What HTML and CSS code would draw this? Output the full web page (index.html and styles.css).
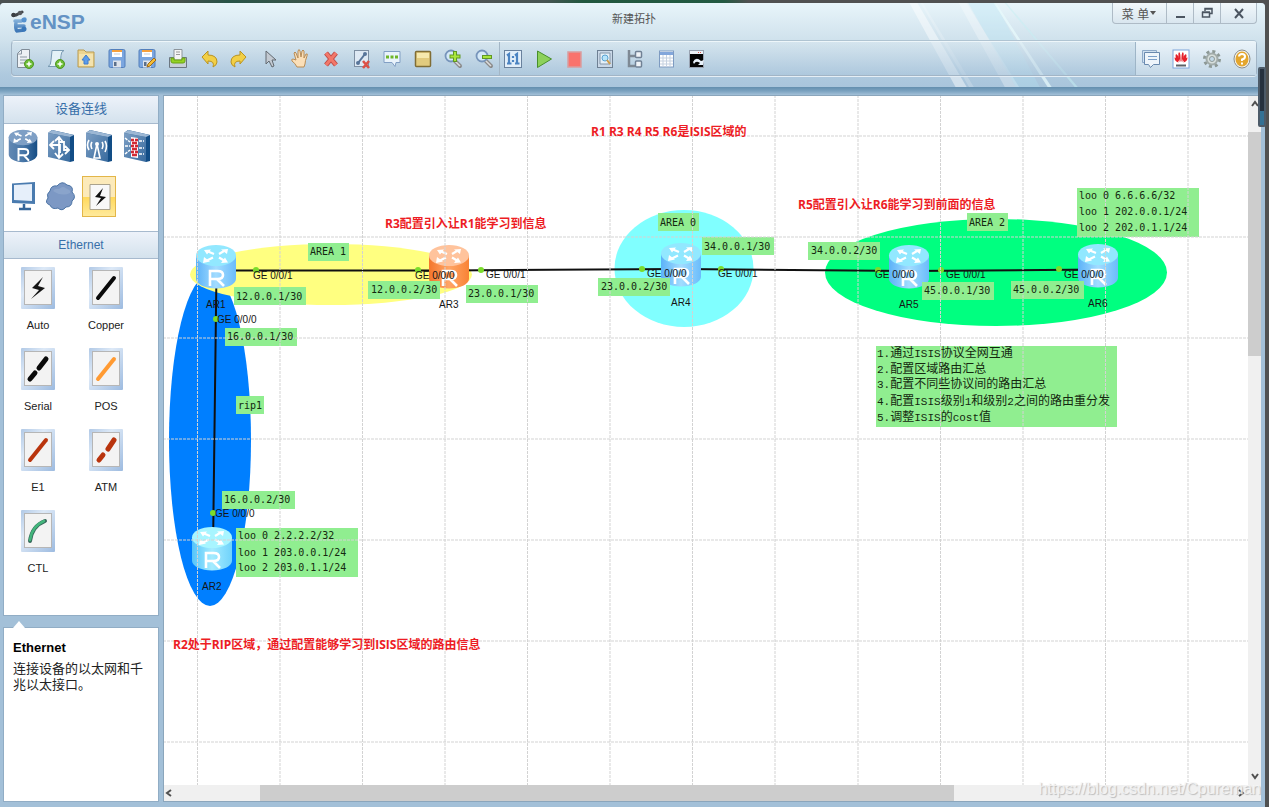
FILE: index.html
```html
<!DOCTYPE html>
<html lang="zh-CN">
<head>
<meta charset="utf-8">
<title>eNSP</title>
<link rel="stylesheet" href="styles.css">
</head>
<body>
<svg class="defs" aria-hidden="true">
  <defs>
    <linearGradient id="gBody" x1="0" x2="1"><stop offset="0" stop-color="#5cb2f8"/><stop offset=".5" stop-color="#a2dcff"/><stop offset="1" stop-color="#6bbcfb"/></linearGradient>
    <linearGradient id="gOrange" x1="0" x2="1"><stop offset="0" stop-color="#f4762c"/><stop offset=".5" stop-color="#ffa566"/><stop offset="1" stop-color="#f98335"/></linearGradient>
    <linearGradient id="gCyan" x1="0" x2="1"><stop offset="0" stop-color="#55c4fa"/><stop offset=".5" stop-color="#a5ecff"/><stop offset="1" stop-color="#6fd2fb"/></linearGradient>
    <linearGradient id="gNavy" x1="0" x2="1"><stop offset="0" stop-color="#6288b3"/><stop offset=".5" stop-color="#4977a8"/><stop offset="1" stop-color="#154d85"/></linearGradient>
    <linearGradient id="gPlate" x1="0" y1="0" x2="1" y2="1"><stop offset="0" stop-color="#7d9fc4"/><stop offset="1" stop-color="#376a9e"/></linearGradient>
    <linearGradient id="gFrame" x1="0" y1="0" x2="1" y2="1"><stop offset="0" stop-color="#b1c9e6"/><stop offset=".35" stop-color="#dde9f7"/><stop offset="1" stop-color="#9dbbe0"/></linearGradient>
    <linearGradient id="gLogo" x1="0" y1="0" x2="0" y2="1"><stop offset="0" stop-color="#8ab6dd"/><stop offset="1" stop-color="#3f78b7"/></linearGradient>
    <g id="arrows">
      <path d="m18 9-6-2.500M23 9l5-3M17 12.500l-6 3M23 12.500l5 3" fill="none" stroke="#fff" stroke-width="2.200"/>
      <path d="m8 5 7-.5-4 5zM32 4l-1 5-6-4.500zM7 18l1-6 6 4.500zM32 17.500l-7 .5 4-5.500z" fill="#fff"/>
    </g>
    <path id="letter" d="M14 41V26h7.500q5.500 0 5.500 4t-5.500 4H14M21 34l7 7" fill="none" stroke="#fff" stroke-width="2.600"/>
    <g id="router">
      <path d="M0 10v24c0 5 9 9.500 20 9.500S40 39 40 34V10z" fill="url(#gBody)"/>
      <ellipse cx="20" cy="10.500" rx="20" ry="10.500" fill="#92e8ff"/>
      <use href="#arrows"/><use href="#letter"/>
    </g>
    <g id="routerOrange">
      <path d="M0 10v24c0 5 9 9.500 20 9.500S40 39 40 34V10z" fill="url(#gOrange)"/>
      <ellipse cx="20" cy="10.500" rx="20" ry="10.500" fill="#ffc39c"/>
      <use href="#arrows"/><use href="#letter"/>
    </g>
    <g id="routerCyan">
      <path d="M0 10v24c0 5 9 9.500 20 9.500S40 39 40 34V10z" fill="url(#gCyan)"/>
      <ellipse cx="20" cy="10.500" rx="20" ry="10.500" fill="#a8f5ff"/>
      <use href="#arrows"/><use href="#letter"/>
    </g>
    <g id="tile">
      <rect width="34" height="42" rx="1" fill="url(#gFrame)"/>
      <rect x="3.500" y="3.500" width="27" height="34" fill="#f3f3f3" stroke="#b6b6b6"/>
    </g>
    <g id="plus"><circle cx="14" cy="16" r="4.500" fill="#6cbd35" stroke="#4f9523"/><path d="M14 13.500v5M11.500 16h5" stroke="#fff" stroke-width="1.500"/></g>
    <g id="disk"><rect x="2" y="1.500" width="16" height="18" rx="1.500" fill="#7ba6df" stroke="#537fbb"/><path d="M5 2h10v7H5z" fill="#fff"/><path d="M5 2h10v2H5z" fill="#f7a13c"/><path d="M6 12.500h8v7H6z" fill="#dde3eb"/><path d="M7 14h2.500v4H7z" fill="#5b6f8a"/><path d="M7 6h6" stroke="#c7ced8"/></g>
    <g id="lens"><path d="m11 12 6 6" stroke="#8b8b8b" stroke-width="4" stroke-linecap="round"/><path d="m11.500 12.500 5.500 5.500" stroke="#ddd" stroke-width="1.500"/><circle cx="8" cy="8" r="5.500" fill="#d5e9f8" stroke="#7795bb" stroke-width="1.800"/></g>
  </defs>
</svg>

<div class="desktop">
 <div class="window">
  <header class="header">
    <svg class="shine" viewBox="0 0 340 85" preserveAspectRatio="none" aria-hidden="true">
      <path d="M56 0h10l62 85h-14z" fill="#fff" opacity=".45"/>
      <path d="M70 0h3l64 85h-6z" fill="#fff" opacity=".2"/>
      <path d="M118 0h10l66 85h-18z" fill="#fff" opacity=".3"/>
      <path d="M130 0h34l56 85h-30z" fill="#b4e6f4" opacity=".3"/>
      <path d="M162 0h3l70 85h-5z" fill="#e8fbfc" opacity=".7"/>
      <path d="M176 0h2l90 85h-4z" fill="#c6eff4" opacity=".5"/>
    </svg>
    <div class="titlebar">
      <div class="brand">
        <svg width="19" height="24" viewBox="0 0 19 24" aria-hidden="true">
          <path d="M2 5q2 1 5-1l4-2" fill="none" stroke="#43464a" stroke-width="3" stroke-linecap="round"/>
          <circle cx="2.500" cy="5" r="2.200" fill="#3b3e42"/><circle cx="9" cy="3" r="2.200" fill="#56595d"/>
          <path d="M4 11h6l4-2M5 12q-1 7 1 9l7-1M6 16h7" fill="none" stroke="url(#gLogo)" stroke-width="3.500" stroke-linecap="round"/>
          <circle cx="13" cy="10" r="2.500" fill="#5692cf"/><circle cx="13" cy="19" r="2.500" fill="#3978ba"/>
        </svg>
        <span class="brand-name">eNSP</span>
      </div>
      <h1 class="title">新建拓扑</h1>
      <div class="window-buttons">
        <button class="menu-button">菜 单<svg width="7" height="6" aria-hidden="true"><path d="M0 1h6L3 5z" fill="#555"/></svg></button>
        <button aria-label="最小化"><svg width="16" height="16"><path d="M4 12h9" stroke="#4b5561" stroke-width="2"/></svg></button>
        <button aria-label="还原"><svg width="16" height="16"><path d="M6 6V3.500h7v5h-2M3.500 7.500h7v4.500h-7zM3 7h8M6 4h7" fill="none" stroke="#4b5561" stroke-width="1.500"/></svg></button>
        <button class="close" aria-label="关闭"><svg width="16" height="16"><path d="m4 4 8 9M12 4l-8 9" stroke="#4b5561" stroke-width="2"/></svg></button>
      </div>
    </div>
    <div class="toolbar">
      <div class="tools tools-main">
        <button aria-label="新建"><svg width="20" height="22" viewBox="0 0 20 22"><path d="M6.500 1.500h8v18h-12v-14z" fill="#edf1f5" stroke="#808c98"/><path d="M2.500 6h4V2M5 9h7M5 12h7M5 15h5" fill="none" stroke="#8b97a3"/><use href="#plus"/></svg></button>
        <button aria-label="新建试卷"><svg width="20" height="22" viewBox="0 0 20 22"><path d="M6 2.500h12q-3 1-3 5l-1 11H2q3-1 3-6z" fill="#e4f2f7" stroke="#7b9cb4"/><use href="#plus"/></svg></button>
        <button aria-label="打开"><svg width="20" height="22" viewBox="0 0 20 22"><path d="M2 4V2h6l2 2h8v15H2z" fill="#ecd592" stroke="#b99b50"/><path d="M3 6h14v12H3z" fill="#f4e3ae"/><path d="m10 7 4 5h-2v4H8v-4H6z" fill="#5c9ceb" stroke="#3f7dcc"/></svg></button>
        <button aria-label="保存"><svg width="20" height="22" viewBox="0 0 20 22"><use href="#disk"/></svg></button>
        <button aria-label="另存为"><svg width="20" height="22" viewBox="0 0 20 22"><use href="#disk"/><path d="m10 19 1-3 6-6 2 2-6 6z" fill="#f5bd36" stroke="#9e6b19"/></svg></button>
        <button aria-label="打印"><svg width="20" height="22" viewBox="0 0 20 22"><path d="M1.500 9.500h17v10h-17z" fill="#c8d0d8" stroke="#6c7781"/><path d="M6 1.500h8V12H6z" fill="#f5f5f5" stroke="#8d959c"/><path d="M8 4h4M8 6.500h4" stroke="#999"/><path d="M3 10v3q0 2 2 2h10q2 0 2-2v-3h-3v2H6v-2z" fill="#94d224" stroke="#69a312"/></svg></button>
        <button aria-label="撤销"><svg width="20" height="22" viewBox="0 0 20 22"><path d="m3 9 6-6v4q9 0 9 7 0 3-4 5 2-6-5-6v3z" fill="#f2cf45" stroke="#b99322"/></svg></button>
        <button aria-label="恢复"><svg width="20" height="22" viewBox="0 0 20 22"><path d="m17 9-6-6v4q-9 0-9 7 0 3 4 5-2-6 5-6v3z" fill="#f2cf45" stroke="#b99322"/></svg></button>
        <button aria-label="选择"><svg width="20" height="22" viewBox="0 0 20 22"><path d="M6 3v13l3-3 3 6 2-1-2-6h4z" fill="#c3cad2" stroke="#626970"/></svg></button>
        <button aria-label="拖动"><svg width="20" height="22" viewBox="0 0 20 22"><path d="M7 19q-2-4-5-6-1-2 1-2l3 1-2-7q1-2 2 0l2 5V3q1-3 2 0l1 6 1-6q1-2 2 0v7l2-4q2-1 1 2-2 5-2 8l-1 3z" fill="#fbdfb8" stroke="#b98c55"/></svg></button>
        <button aria-label="删除"><svg width="20" height="22" viewBox="0 0 20 22"><path d="m5 5 10 12M15 5 5 17" stroke="#bf4e49" stroke-width="5"/><path d="m5 5 10 12M15 5 5 17" stroke="#f27769" stroke-width="3"/></svg></button>
        <button aria-label="删除连线"><svg width="20" height="22" viewBox="0 0 20 22"><rect x="2.500" y="2.500" width="14" height="16" fill="#dee9f4" stroke="#7d8ea2"/><path d="m6 15 7-9" stroke="#58759a" stroke-width="2"/><circle cx="6" cy="15" r="2" fill="#58759a"/><circle cx="13" cy="6" r="2" fill="#58759a"/><path d="m11 13 6 7M17 13l-6 7" stroke="#dc5046" stroke-width="2.600"/></svg></button>
        <button aria-label="文本"><svg width="20" height="22" viewBox="0 0 20 22"><path d="M2 3.500h16v11h-4l-1 4-3-4H2z" fill="#e9f3fb" stroke="#829fc4"/><path d="M4 9h3M8.500 9h3M13 9h3" stroke="#6eb629" stroke-width="3"/></svg></button>
        <button aria-label="调色板"><svg width="20" height="22" viewBox="0 0 20 22"><rect x="2.500" y="3.500" width="15" height="15" rx="1" fill="#e2cb7e" stroke="#806d35" stroke-width="1.500"/><path d="M4 5h12v5H4z" fill="#f6e9ae"/></svg></button>
        <button aria-label="放大"><svg width="20" height="22" viewBox="0 0 20 22"><use href="#lens"/><path d="M12 3v11M6.500 8.500h11" stroke="#609923" stroke-width="4"/><path d="M12 4v9M7.500 8.500h9" stroke="#a9e63d" stroke-width="2"/></svg></button>
        <button aria-label="缩小"><svg width="20" height="22" viewBox="0 0 20 22"><use href="#lens"/><path d="M8 9h10" stroke="#609923" stroke-width="4"/><path d="M9 9h8" stroke="#a9e63d" stroke-width="2"/></svg></button>
      </div>
      <div class="tools tools-run">
        <button aria-label="原始大小"><svg width="20" height="22" viewBox="0 0 20 22"><rect x="1.500" y="2.500" width="17" height="17" fill="#e2eef9" stroke="#69819d"/><path d="M4 7.500 6 6v9M4 15.500h4.500M12 7.500 14 6v9M12 15.500h4.500M10 8v2M10 12v2" fill="none" stroke="#4c84c2" stroke-width="2.200"/></svg></button>
        <button aria-label="开启设备"><svg width="20" height="22" viewBox="0 0 20 22"><path d="m3.500 3 14 8-14 8.500z" fill="#8dd15a" stroke="#478f2b"/></svg></button>
        <button aria-label="停止设备"><svg width="20" height="22" viewBox="0 0 20 22"><rect x="4" y="4" width="13" height="15" fill="#f9736d" stroke="#d99d9f" stroke-width="1.500"/></svg></button>
        <button aria-label="数据抓包"><svg width="20" height="22" viewBox="0 0 20 22"><rect x="2.500" y="2.500" width="15" height="17" fill="#cad8e7" stroke="#6e8093"/><path d="M5 5h10v11H5z" fill="#e5f0f8" stroke="#8496a9"/><circle cx="10" cy="10" r="3" fill="#b8e4fa" stroke="#5aa3d3"/><path d="m12 12 3 4" stroke="#cf9c4a" stroke-width="2"/></svg></button>
        <button aria-label="设备列表"><svg width="20" height="22" viewBox="0 0 20 22"><path d="M4 2v16h6M4 8h7" fill="none" stroke="#7e8994" stroke-width="2.500"/><rect x="10.500" y="3.500" width="6" height="6" rx="1" fill="#f0f4f8" stroke="#708195" stroke-width="1.500"/><rect x="10.500" y="13" width="6" height="6" rx="1" fill="#f0f4f8" stroke="#708195" stroke-width="1.500"/></svg></button>
        <button aria-label="接口列表"><svg width="20" height="22" viewBox="0 0 20 22"><rect x="3.500" y="3" width="14" height="16" fill="#fff" stroke="#7e9bc1"/><path d="M4 4h13v3H4z" fill="#83a7db"/><path d="M4 10h13M4 13h13M4 16h13M7 7v12M10.500 7v12M14 7v12" stroke="#c5d1e0"/></svg></button>
        <button aria-label="命令行"><svg width="20" height="22" viewBox="0 0 20 22"><rect x="3.500" y="2.500" width="14" height="17" fill="#050505" stroke="#98a2b1"/><path d="M4 3h13v3H4z" fill="#eef3f8"/><path d="M12 4.500h4" stroke="#e05b50" stroke-dasharray="1 1"/><path d="M7 14q3-6 8-1l3-1-1 5h-5l2-2q-4-3-6 1z" fill="#e8f1fa"/></svg></button>
      </div>
      <div class="tools tools-side">
        <button aria-label="论坛"><svg width="20" height="22" viewBox="0 0 20 22"><path d="M1.500 2.500h14v12h-14z" fill="#cfe0f0" stroke="#8da9c8"/><path d="M3.500 4.500h15v12h-6l-3 3-2-3h-4z" fill="#eef5fb" stroke="#6989ae"/><path d="M7 8.500h9M7 11.500h9" stroke="#7b9fc9"/></svg></button>
        <button aria-label="官网"><svg width="20" height="22" viewBox="0 0 20 22"><rect x="2" y="2" width="16" height="18" fill="#fff" stroke="#7fa5dc"/><g fill="#e5212d"><path d="M9.500 14Q6 7 8 4q2 1 1.500 10M10.500 14Q14 7 12 4q-2 1-1.500 10M8.500 14Q3 9 5 6q3 1 3.500 8M11.500 14Q17 9 15 6q-3 1-3.500 8M7.500 14.500q-4-1-4-5 3 0 4 5M12.500 14.500q4-1 4-5-3 0-4 5"/></g><path d="M5 17.500h10" stroke="#5c6268" stroke-width="2"/></svg></button>
        <button aria-label="设置"><svg width="20" height="22" viewBox="0 0 20 22"><circle cx="10" cy="11" r="7.500" fill="none" stroke="#8d9996" stroke-width="3" stroke-dasharray="3 2.900"/><circle cx="10" cy="11" r="5.500" fill="#d7dfdc" stroke="#a2acaa" stroke-width="2"/><circle cx="10" cy="11" r="2.500" fill="#c2d9e8" stroke="#909b99"/></svg></button>
        <button aria-label="帮助"><svg width="20" height="22" viewBox="0 0 20 22"><ellipse cx="10" cy="11" rx="8" ry="9" fill="#f4f4f2" stroke="#8c8c86"/><ellipse cx="10" cy="11" rx="6.500" ry="7.500" fill="#e4a62d"/><path d="M7 8.500q0-2.500 3-2.500t3 2.500-3 3V13M10 14.500v2" fill="none" stroke="#fff" stroke-width="2"/></svg></button>
      </div>
    </div>
  </header>

  <div class="workspace">
    <aside class="sidebar">
      <section class="palette">
        <h2 class="palette-title">设备连线</h2>
        <div class="categories">
          <button aria-label="路由器"><svg width="30" height="34" viewBox="0 0 40 44" preserveAspectRatio="none"><path d="M1 10v23c0 5 8 10 19 10s19-5 19-10V10z" fill="url(#gNavy)"/><ellipse cx="20" cy="11" rx="19" ry="10" fill="#7e9fc5"/><use href="#arrows"/><use href="#letter"/></svg></button>
          <button aria-label="交换机"><svg width="30" height="34" viewBox="0 0 30 34"><path d="m2 4 4-3 22 5v26l-4 1z" fill="#124d86"/><path d="m2 4 22 4v25L2 28z" fill="url(#gPlate)"/><path d="m2 4 4-3 22 5-4 2z" fill="#9cb7d4"/><path d="M13 9v19M9 12l4-4 4 5M9 24l4 5 4-4M5 16h9v8M13 13h5v8h4M8 12l-4 4 4 4M19 17l4 4-4 4" fill="none" stroke="#fff" stroke-width="1.800"/></svg></button>
          <button aria-label="无线局域网"><svg width="30" height="34" viewBox="0 0 30 34"><path d="m2 4 4-3 22 5v26l-4 1z" fill="#124d86"/><path d="m2 4 22 4v25L2 28z" fill="url(#gPlate)"/><path d="m2 4 4-3 22 5-4 2z" fill="#9cb7d4"/><path d="m10 29 3-14 3 14zM8 13q-2 3 0 7M18 13q2 3 0 7M5 11q-3 5 0 10M21 12q3 5 0 11" fill="none" stroke="#fff" stroke-width="1.600"/><circle cx="13" cy="15" r="2" fill="#fff"/></svg></button>
          <button aria-label="防火墙"><svg width="30" height="34" viewBox="0 0 30 34"><path d="m2 4 4-3 22 5v26l-4 1z" fill="#124d86"/><path d="m2 4 22 4v25L2 28z" fill="url(#gPlate)"/><path d="m2 4 4-3 22 5-4 2z" fill="#9cb7d4"/><path d="m9 8 7 1v20l-7-1z" fill="#fff"/><path d="M9 11h3M13 11h3M10 14h5M9 17h3M13 17h3M10 20h5M9 23h3M13 23h3M10 26h5" stroke="#d22b35" stroke-width="2.400"/><path d="m3 9 5 4M3 17h5M3 25l5-4M17 12h5M17 19h5M17 25h5" stroke="#fff" stroke-width="1.500" stroke-dasharray="3 1"/></svg></button>
          <button aria-label="终端"><svg width="30" height="34" viewBox="0 0 30 34"><path d="M4 4.500 27 3v22L4 24z" fill="#4a7baf"/><path d="m6 6 18-1v17L6 21z" fill="#e6effa"/><path d="M16 25v4M11 30h12" stroke="#35669a" stroke-width="2.500"/></svg></button>
          <button aria-label="其他设备"><svg width="32" height="34" viewBox="0 0 32 34"><path d="M5 12q1-6 7-5 5-6 10-1 7 1 5 7 5 5 0 9 0 6-6 6-4 5-8 1-6 2-8-3-6-2-2-7-2-4 2-7z" fill="#7c98c4" stroke="#4c74a5"/><path d="M8 12q2-3 6-2 4-4 8 0 4 1 3 4-8 4-17-2z" fill="#a0b6d7" opacity=".4"/></svg></button>
          <button class="selected" aria-label="设备连线"><svg width="34" height="40" viewBox="0 0 34 40"><path d="M7 7.500h20v25H7z" fill="#f8f8f8" stroke="#aaa28d"/><path d="m20 11-8 9 6 1-5 8 10-9-6-1z" fill="#111"/></svg></button>
        </div>
        <h2 class="palette-title latin">Ethernet</h2>
        <div class="links">
          <button class="link"><svg width="34" height="42"><use href="#tile"/><path d="M22 10 11 21l7 2-8 9 14-11-7-2z" fill="#151515"/></svg>Auto</button>
          <button class="link"><svg width="34" height="42"><use href="#tile"/><path d="M9 31 25 11" stroke="#0a0a0a" stroke-width="4" stroke-linecap="round"/></svg>Copper</button>
          <button class="link"><svg width="34" height="42"><use href="#tile"/><path d="m9 31 5-6M18 20l7-9" stroke="#0a0a0a" stroke-width="5" stroke-linecap="round"/></svg>Serial</button>
          <button class="link"><svg width="34" height="42"><use href="#tile"/><path d="M9 31 25 11" stroke="#ff9a32" stroke-width="4" stroke-linecap="round"/></svg>POS</button>
          <button class="link"><svg width="34" height="42"><use href="#tile"/><path d="M9 31 25 11" stroke="#b9340d" stroke-width="4" stroke-linecap="round"/></svg>E1</button>
          <button class="link"><svg width="34" height="42"><use href="#tile"/><path d="m10 31 4-5M19 20l6-9" stroke="#b9340d" stroke-width="5" stroke-linecap="round"/></svg>ATM</button>
          <button class="link"><svg width="34" height="42"><use href="#tile"/><path d="M9 31q2-15 15-20" fill="none" stroke="#35685a" stroke-width="4" stroke-linecap="round"/><path d="M9 30q2-14 14-19" fill="none" stroke="#43b67c" stroke-width="2.500" stroke-linecap="round"/></svg>CTL</button>
        </div>
      </section>
      <section class="description">
        <h3>Ethernet</h3>
        <p>连接设备的以太网和千兆以太接口。</p>
      </section>
    </aside>

    <main class="stage">
      <div class="canvas">
        <svg class="topology" width="1085" height="691" viewBox="164 96 1085 691">
          <ellipse cx="210" cy="440" rx="41" ry="166" fill="#007fff"/>
          <ellipse cx="331" cy="274.500" rx="141" ry="30.500" fill="#ffff80"/>
          <ellipse cx="684" cy="268.500" rx="69.500" ry="58.500" fill="#80ffff"/>
          <ellipse cx="996" cy="272.500" rx="171" ry="53.500" fill="#00ff80"/>
          <path class="wire" d="M216 270.500h233l232-1.500 228 2 189-1.500M216.500 270 213 550"/>
          <g class="dots">
            <circle cx="256" cy="270" r="3"/><circle cx="418" cy="270" r="3"/><circle cx="481" cy="270" r="3"/><circle cx="642" cy="269" r="3"/><circle cx="721" cy="269" r="3"/><circle cx="878" cy="270" r="3"/><circle cx="941" cy="270" r="3"/><circle cx="1059" cy="269" r="3"/><circle cx="216" cy="319" r="3"/><circle cx="213" cy="513" r="3"/>
          </g>
          <use href="#router" x="196" y="245"/><use href="#routerOrange" x="429" y="245"/><use href="#router" x="661" y="243"/><use href="#router" x="889" y="245"/><use href="#router" x="1078" y="244"/><use href="#routerCyan" x="192" y="527"/>
          <g class="tag-box">
            <path d="M308 243h41v18h-41zM234 287h72v18h-72zM368 281h72v18h-72zM466 285h72v18h-72zM225 328h72v18h-72zM236 396h28v18h-28zM222 491h73v18h-73zM236 528h122v49H236zM658 213h41v18h-41zM702 237h72v18h-72zM598 278h72v18h-72zM808 242h72v18h-72zM967 213h41v18h-41zM922 282h72v18h-72zM1011 281h73v18h-73zM1077 188h122v49h-122zM876 346h241v81H876z"/>
          </g>
          <path class="grid" d="M163 136h1085M163 237h1085M163 338h1085M163 439h1085M163 540h1085M163 641h1085M163 742h1085M197.500 95v691M280 95v691M362.500 95v691M445 95v691M527.500 95v691M610 95v691M692.500 95v691M775 95v691M858 95v691M940.500 95v691M1023 95v691M1105.500 95v691M1188 95v691"/>
          <g class="port">
            <text x="253" y="279">GE 0/0/1</text><text x="415" y="279">GE 0/0/0</text><text x="486" y="278">GE 0/0/1</text><text x="647" y="277">GE 0/0/0</text><text x="718" y="277">GE 0/0/1</text><text x="875" y="278">GE 0/0/0</text><text x="946" y="278">GE 0/0/1</text><text x="1064" y="278">GE 0/0/0</text><text x="217" y="323">GE 0/0/0</text><text x="215" y="517">GE 0/0/0</text>
            <text x="206" y="308">AR1</text><text x="439" y="308">AR3</text><text x="671" y="306">AR4</text><text x="899" y="308">AR5</text><text x="1088" y="307">AR6</text><text x="202" y="590">AR2</text>
          </g>
          <g class="tag">
            <text x="310" y="255">AREA 1</text><text x="236" y="300">12.0.0.1/30</text><text x="371" y="293">12.0.0.2/30</text><text x="468" y="297">23.0.0.1/30</text><text x="227" y="340">16.0.0.1/30</text><text x="238" y="409">rip1</text><text x="224" y="503">16.0.0.2/30</text>
            <text x="238" y="539">loo 0 2.2.2.2/32</text><text x="238" y="556">loo 1 203.0.0.1/24</text><text x="238" y="571">loo 2 203.0.1.1/24</text>
            <text x="660" y="226">AREA 0</text><text x="704" y="250">34.0.0.1/30</text><text x="601" y="290">23.0.0.2/30</text><text x="811" y="254">34.0.0.2/30</text><text x="969" y="226">AREA 2</text><text x="924" y="294">45.0.0.1/30</text><text x="1013" y="293">45.0.0.2/30</text>
            <text x="1079" y="199">loo 0 6.6.6.6/32</text><text x="1079" y="215">loo 1 202.0.0.1/24</text><text x="1079" y="231">loo 2 202.0.1.1/24</text>
          </g>
          <g class="note">
            <text x="877" y="357"><tspan>1.</tspan>通过<tspan>ISIS</tspan>协议全网互通</text>
            <text x="877" y="373"><tspan>2.</tspan>配置区域路由汇总</text>
            <text x="877" y="388"><tspan>3.</tspan>配置不同些协议间的路由汇总</text>
            <text x="877" y="405"><tspan>4.</tspan>配置<tspan>ISIS</tspan>级别<tspan>1</tspan>和级别<tspan>2</tspan>之间的路由重分发</text>
            <text x="877" y="421"><tspan>5.</tspan>调整<tspan>ISIS</tspan>的<tspan>cost</tspan>值</text>
          </g>
          <g class="remark">
            <text x="591" y="136">R1 R3 R4 R5 R6是ISIS区域的</text>
            <text x="385" y="228">R3配置引入让R1能学习到信息</text>
            <text x="798" y="209">R5配置引入让R6能学习到前面的信息</text>
            <text x="173" y="649">R2处于RIP区域，通过配置能够学习到ISIS区域的路由信息</text>
          </g>
        </svg>
      </div>
      <div class="scroll-y">
        <svg width="8" height="8"><path d="m1 6 3-4 3 4" class="chevron"/></svg>
        <div class="track-y"><div class="thumb-y"></div></div>
        <svg width="8" height="8"><path d="m1 2 3 4 3-4" class="chevron"/></svg>
      </div>
      <div class="scroll-x">
        <svg width="8" height="8"><path d="M6 1 2 4l4 3" class="chevron"/></svg>
        <div class="track-x"><div class="thumb-x"></div></div>
        <svg width="8" height="8"><path d="m2 1 4 3-4 3" class="chevron"/></svg>
      </div>
    </main>
  </div>
 </div>
 <div class="side-handle"></div>
 <div class="watermark">https://blog.csdn.net/Cpureman</div>
</div>
</body>
</html>
```
FILE: styles.css
```css
* { box-sizing: border-box; }

body {
  margin: 0;
  font-family: "Liberation Sans", "Noto Sans CJK SC", sans-serif;
  font-size: 12px;
  color: #222;
}

button {
  margin: 0;
  padding: 0;
  border: 0;
  background: none;
  font: inherit;
  color: inherit;
}

svg { display: block; }
.defs { position: absolute; width: 0; height: 0; }
h1, h2, h3, p { margin: 0; font-weight: normal; }

.desktop {
  position: relative;
  height: 100vh;
  padding: 3px 4px 0 0;
  overflow: hidden;
  background: linear-gradient(90deg, #4b5152, #46504c 14%, #285447 18%, #3f554b 26%, #505354 35%, #475553 43%, #21583f 46%, #235a42 57%, #505151 59%);
}

.window {
  display: flex;
  flex-direction: column;
  height: 100%;
  border-radius: 4px 4px 0 0;
  background: #a3c0d8;
  overflow: hidden;
}

.header {
  position: relative;
  flex: none;
  height: 92px;
  padding: 0 8px 0 11px;
  background: linear-gradient(#e8f5fa, #cfe1ec 38px, #aec9de 72px, #a9c5dc 84px, #638eae 84px, #7ba2c0 88px, #a3c0d8 92px);
}

.shine { position: absolute; right: 130px; top: 0; width: 270px; height: 84px; }

.titlebar {
  position: relative;
  display: flex;
  justify-content: space-between;
  height: 38px;
}

.brand { display: flex; flex: 1; align-items: center; }
.brand-name { font: bold 21px "Liberation Sans", sans-serif; color: #6392c4; }
.title { font-size: 11px; line-height: 32px; color: #555; }

.window-buttons {
  display: flex;
  flex: 1;
  justify-content: flex-end;
  height: 21px;
}
.window-buttons button {
  display: flex;
  align-items: center;
  justify-content: center;
  width: 27px;
  border: 1px solid #aebbc6;
  border-width: 0 1px 1px 0;
  background: linear-gradient(#f2f8fb, #d9e6ef);
  color: #555;
}
.window-buttons .menu-button { width: 55px; gap: 1px; border-left-width: 1px; border-radius: 0 0 0 4px; }
.window-buttons .close { width: 36px; border-radius: 0 0 4px 0; }

.toolbar {
  position: relative;
  display: flex;
  height: 35px;
  border: 1px solid #a2b5c6;
  border-top-color: #eef6fa;
  border-radius: 4px;
  background: linear-gradient(#dce9f180, #adc7dc80);
  box-shadow: 0 -1px #b0c4d2, 0 1px #e5eef5;
}
.tools { display: flex; align-items: center; justify-content: space-between; }
.tools-main { width: 487px; padding: 0 5px 0 3px; }
.tools-run { width: 214px; padding: 0 7px 0 3px; border-left: 1px solid #a3b6c6; }
.tools-side {
  width: 121px;
  margin-left: auto;
  padding: 0 4px 0 5px;
  border-left: 1px solid #9eb5c7;
  background: linear-gradient(#eaf3f9, #c4d8e7);
}

.workspace { display: flex; flex: 1; gap: 4px; min-height: 0; padding: 0 4px 5px 3px; }

.sidebar { display: flex; flex: none; flex-direction: column; gap: 11px; width: 156px; }
.palette { height: 521px; border: 1px solid #91adc5; background: #fff; }
.palette-title {
  height: 28px;
  border-bottom: 1px solid #a7bace;
  background: linear-gradient(#edf2fa, #d4e2ed);
  color: #386fa9;
  font-size: 13px;
  line-height: 26px;
  text-align: center;
}
.latin { border-top: 1px solid #a7bace; font-size: 12px; }
.categories {
  display: grid;
  grid-template-columns: repeat(4, 34px);
  grid-template-rows: 50px 50px;
  align-items: start;
  column-gap: 4px;
  height: 107px;
  padding-left: 2px;
}
.categories button { display: grid; place-items: center; height: 44px; }
.categories .selected {
  height: 41px;
  margin-top: 2px;
  border: 1px solid #e3b648;
  background: linear-gradient(#fceaba 50%, #ffd85a 50%, #ffea9c);
}
.links {
  display: grid;
  grid-template-columns: 68px 68px;
  grid-auto-rows: 81px;
  padding-top: 8px;
}
.link { display: flex; flex-direction: column; align-items: center; gap: 10px; font-size: 11px; }

.description {
  position: relative;
  flex: 1;
  padding: 13px 9px;
  border: 1px solid #91adc5;
  background: #fff;
}
.description::before {
  content: "";
  position: absolute;
  top: -7px;
  left: 9px;
  border: 6px solid transparent;
  border-top: 0;
  border-bottom: 7px solid #fff;
}
.description h3 { font-size: 13px; font-weight: bold; line-height: 14px; color: #000; }
.description p { padding-top: 6px; font-size: 13px; line-height: 16px; }

.stage {
  display: grid;
  flex: 1;
  grid-template: minmax(0, 1fr) 16px / minmax(0, 1fr) 13px;
  min-width: 0;
  border: 1px solid #8ba6bc;
  border-width: 1px 0 1px 1px;
  background: #fff;
}
.canvas { overflow: hidden; }
.scroll-y { display: flex; flex-direction: column; align-items: center; padding: 4px 0 5px; background: #f0f0f0; }
.track-y { flex: 1; width: 100%; padding: 24px 0 0 0; }
.thumb-y { height: 35%; background: #cdcdcd; }
.scroll-x { display: flex; grid-column: 1 / -1; align-items: center; padding: 0 16px 0 1px; background: #f0f0f0; }
.track-x { flex: 1; height: 100%; padding-left: 87px; }
.thumb-x { width: 71%; height: 100%; background: #cdcdcd; }
.chevron { fill: none; stroke: #505050; stroke-width: 2; }

.wire { fill: none; stroke: #101010; stroke-width: 2; }
.dots { fill: #7bdc2c; }
.tag-box { fill: #90ee90; }
.tag { font: 10px "DejaVu Sans Mono", monospace; fill: #14280f; white-space: pre; }
.port { font: 10px "Liberation Sans", sans-serif; fill: #151515; }
.note { font: 12px "Noto Sans CJK SC", sans-serif; fill: #14280f; }
.note tspan { font: 11px "Liberation Mono", monospace; }
.remark { font: bold 12px "Open Sans", "Noto Sans CJK SC", sans-serif; fill: #ed1c24; }
.grid { fill: none; stroke: #d3d3d3; stroke-width: 1; stroke-dasharray: 3 1; }

.side-handle {
  position: absolute;
  top: 67px;
  right: 3px;
  width: 8px;
  height: 60px;
  border: 2px solid #4d5b69;
  border-radius: 2px;
  background: linear-gradient(#26313f 75%, #347194 75%);
}
.watermark {
  position: absolute;
  right: 8px;
  bottom: 9px;
  font-size: 16px;
  line-height: 18px;
  color: #f8f8f8cc;
  text-shadow: 1px 1px 1px #bbb;
}
```
